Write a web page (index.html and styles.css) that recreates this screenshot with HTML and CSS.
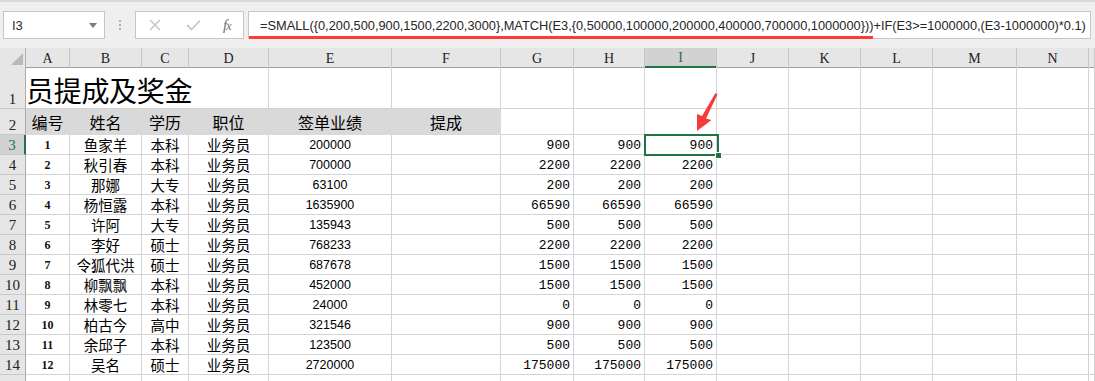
FILE: index.html
```html
<!DOCTYPE html>
<html lang="zh">
<head>
<meta charset="utf-8">
<title>员工提成及奖金</title>
<link rel="stylesheet" href="styles.css">
</head>
<body>
<div class="app">
  <div class="toolbar">
    <div class="namebox">
      <span class="nb-text">I3</span>
      <svg class="nb-caret" width="8" height="5" viewBox="0 0 8 5"><polygon points="0,0 8,0 4,5" fill="#7a7a7a"/></svg>
    </div>
    <div class="grip"><span></span><span></span><span></span></div>
    <div class="fbtns">
      <svg class="fb-x" width="12" height="12" viewBox="0 0 12 12"><path d="M1 1 L11 11 M11 1 L1 11" stroke="#c8c8c8" stroke-width="1.6" fill="none"/></svg>
      <svg class="fb-ok" width="15" height="12" viewBox="0 0 15 12"><path d="M1 6 L5.5 10.5 L14 1.5" stroke="#c8c8c8" stroke-width="1.8" fill="none"/></svg>
      <span class="fb-fx">f<i>x</i></span>
    </div>
    <div class="formula">
      <span class="f-mark">=SMALL({0,200,500,900,1500,2200,3000},MATCH(E3,{0,50000,100000,200000,400000,700000,1000000}))</span><span class="f-rest">+IF(E3&gt;=1000000,(E3-1000000)*0.1)</span>
    </div>
  </div>

  <div class="sheet">
    <div class="row hdr">
      <div class="corner"><svg width="12" height="12" viewBox="0 0 12 12"><polygon points="12,0 12,12 0,12" fill="#b9b9b9"/></svg></div>
      <div class="ch">A</div><div class="ch">B</div><div class="ch">C</div><div class="ch">D</div><div class="ch">E</div><div class="ch">F</div><div class="ch">G</div><div class="ch">H</div><div class="ch sel">I</div><div class="ch">J</div><div class="ch">K</div><div class="ch">L</div><div class="ch">M</div><div class="ch">N</div><div class="ch"></div>
    </div>

    <div class="row r1">
      <div class="rh">1</div>
      <div class="c title">员提成及奖金</div>
      <div class="c"></div><div class="c"></div><div class="c"></div><div class="c"></div><div class="c"></div><div class="c"></div><div class="c"></div><div class="c"></div><div class="c"></div><div class="c"></div><div class="c"></div>
    </div>

    <div class="row r2">
      <div class="rh">2</div>
      <div class="c th">编号</div><div class="c th">姓名</div><div class="c th">学历</div><div class="c th">职位</div><div class="c th">签单业绩</div><div class="c th">提成</div>
      <div class="c"></div><div class="c"></div><div class="c"></div><div class="c"></div><div class="c"></div><div class="c"></div><div class="c"></div><div class="c"></div><div class="c"></div>
    </div>

    <div class="row d"><div class="rh selrow">3</div><div class="c na">1</div><div class="c cj">鱼家羊</div><div class="c cj">本科</div><div class="c cj">业务员</div><div class="c en">200000</div><div class="c"></div><div class="c nr">900</div><div class="c nr">900</div><div class="c nr">900</div><div class="c"></div><div class="c"></div><div class="c"></div><div class="c"></div><div class="c"></div><div class="c"></div></div>
    <div class="row d"><div class="rh">4</div><div class="c na">2</div><div class="c cj">秋引春</div><div class="c cj">本科</div><div class="c cj">业务员</div><div class="c en">700000</div><div class="c"></div><div class="c nr">2200</div><div class="c nr">2200</div><div class="c nr">2200</div><div class="c"></div><div class="c"></div><div class="c"></div><div class="c"></div><div class="c"></div><div class="c"></div></div>
    <div class="row d"><div class="rh">5</div><div class="c na">3</div><div class="c cj">那娜</div><div class="c cj">大专</div><div class="c cj">业务员</div><div class="c en">63100</div><div class="c"></div><div class="c nr">200</div><div class="c nr">200</div><div class="c nr">200</div><div class="c"></div><div class="c"></div><div class="c"></div><div class="c"></div><div class="c"></div><div class="c"></div></div>
    <div class="row d"><div class="rh">6</div><div class="c na">4</div><div class="c cj">杨恒露</div><div class="c cj">本科</div><div class="c cj">业务员</div><div class="c en">1635900</div><div class="c"></div><div class="c nr">66590</div><div class="c nr">66590</div><div class="c nr">66590</div><div class="c"></div><div class="c"></div><div class="c"></div><div class="c"></div><div class="c"></div><div class="c"></div></div>
    <div class="row d"><div class="rh">7</div><div class="c na">5</div><div class="c cj">许阿</div><div class="c cj">大专</div><div class="c cj">业务员</div><div class="c en">135943</div><div class="c"></div><div class="c nr">500</div><div class="c nr">500</div><div class="c nr">500</div><div class="c"></div><div class="c"></div><div class="c"></div><div class="c"></div><div class="c"></div><div class="c"></div></div>
    <div class="row d"><div class="rh">8</div><div class="c na">6</div><div class="c cj">李好</div><div class="c cj">硕士</div><div class="c cj">业务员</div><div class="c en">768233</div><div class="c"></div><div class="c nr">2200</div><div class="c nr">2200</div><div class="c nr">2200</div><div class="c"></div><div class="c"></div><div class="c"></div><div class="c"></div><div class="c"></div><div class="c"></div></div>
    <div class="row d"><div class="rh">9</div><div class="c na">7</div><div class="c cj">令狐代洪</div><div class="c cj">硕士</div><div class="c cj">业务员</div><div class="c en">687678</div><div class="c"></div><div class="c nr">1500</div><div class="c nr">1500</div><div class="c nr">1500</div><div class="c"></div><div class="c"></div><div class="c"></div><div class="c"></div><div class="c"></div><div class="c"></div></div>
    <div class="row d"><div class="rh">10</div><div class="c na">8</div><div class="c cj">柳飘飘</div><div class="c cj">本科</div><div class="c cj">业务员</div><div class="c en">452000</div><div class="c"></div><div class="c nr">1500</div><div class="c nr">1500</div><div class="c nr">1500</div><div class="c"></div><div class="c"></div><div class="c"></div><div class="c"></div><div class="c"></div><div class="c"></div></div>
    <div class="row d"><div class="rh">11</div><div class="c na">9</div><div class="c cj">林零七</div><div class="c cj">本科</div><div class="c cj">业务员</div><div class="c en">24000</div><div class="c"></div><div class="c nr">0</div><div class="c nr">0</div><div class="c nr">0</div><div class="c"></div><div class="c"></div><div class="c"></div><div class="c"></div><div class="c"></div><div class="c"></div></div>
    <div class="row d"><div class="rh">12</div><div class="c na">10</div><div class="c cj">柏古今</div><div class="c cj">高中</div><div class="c cj">业务员</div><div class="c en">321546</div><div class="c"></div><div class="c nr">900</div><div class="c nr">900</div><div class="c nr">900</div><div class="c"></div><div class="c"></div><div class="c"></div><div class="c"></div><div class="c"></div><div class="c"></div></div>
    <div class="row d"><div class="rh">13</div><div class="c na">11</div><div class="c cj">余邱子</div><div class="c cj">本科</div><div class="c cj">业务员</div><div class="c en">123500</div><div class="c"></div><div class="c nr">500</div><div class="c nr">500</div><div class="c nr">500</div><div class="c"></div><div class="c"></div><div class="c"></div><div class="c"></div><div class="c"></div><div class="c"></div></div>
    <div class="row d"><div class="rh">14</div><div class="c na">12</div><div class="c cj">吴名</div><div class="c cj">硕士</div><div class="c cj">业务员</div><div class="c en">2720000</div><div class="c"></div><div class="c nr">175000</div><div class="c nr">175000</div><div class="c nr">175000</div><div class="c"></div><div class="c"></div><div class="c"></div><div class="c"></div><div class="c"></div><div class="c"></div></div>
    <div class="row d"><div class="rh"></div><div class="c"></div><div class="c"></div><div class="c"></div><div class="c"></div><div class="c"></div><div class="c"></div><div class="c"></div><div class="c"></div><div class="c"></div><div class="c"></div><div class="c"></div><div class="c"></div><div class="c"></div><div class="c"></div><div class="c"></div></div>

    <div class="selection"><span class="handle"></span></div>
    <svg class="arrow" width="30" height="44" viewBox="0 0 30 44">
      <polygon points="6,40 6,23 11,25 24.5,2 26.5,3.5 15,27.5 20.5,29" fill="#f53b3b"/>
    </svg>
  </div>
</div>
</body>
</html>
```

FILE: styles.css
```css
* { box-sizing: border-box; }
html, body { margin: 0; padding: 0; background: #ffffff; }
body { width: 1095px; height: 381px; overflow: hidden; font-family: "Liberation Sans", Arial, sans-serif; }

.app { width: 1095px; }

/* ---------- formula bar ---------- */
.toolbar {
  height: 48px;
  background: #efefef;
  border-top: 2px solid #d9d9d9;
  display: flex;
  align-items: flex-start;
  padding: 9px 4px 0 3px;
}
.namebox {
  width: 102px;
  height: 28px;
  background: #fff;
  border: 1px solid #c6c6c6;
  display: flex;
  align-items: center;
  justify-content: space-between;
  padding: 0 7px 0 8px;
}
.nb-text { font-size: 13px; color: #2b2b2b; }
.nb-caret { margin-top: 1px; }
.grip {
  width: 30px;
  height: 28px;
  display: flex;
  flex-direction: column;
  align-items: center;
  justify-content: center;
  gap: 2px;
}
.grip span { width: 2px; height: 2px; background: #b0b0b0; display: block; }
.fbtns {
  width: 109px;
  height: 28px;
  background: #fff;
  border: 1px solid #c6c6c6;
  display: flex;
  align-items: center;
  padding: 0 0 0 13px;
}
.fb-x { margin-right: 25px; }
.fb-ok { margin-right: 22px; }
.fb-fx {
  font-family: "Liberation Serif", "Times New Roman", serif;
  font-style: italic;
  font-size: 15px;
  color: #6e6e6e;
  letter-spacing: -1px;
}
.fb-fx i { font-size: 12px; }
.formula {
  flex: 1;
  margin-left: 4px;
  height: 28px;
  background: #fff;
  border: 1px solid #c6c6c6;
  border-bottom: none;
  display: flex;
  align-items: stretch;
  font-size: 12.8px;
  color: #262626;
  white-space: nowrap;
  overflow: hidden;
}
.f-mark {
  display: flex;
  align-items: center;
  padding-left: 11px;
  border-bottom: 3px solid #ff3a3a;
  padding-top: 2px;
}
.f-rest {
  flex: 1;
  display: flex;
  align-items: center;
  border-bottom: 1px solid #c6c6c6;
}

/* ---------- sheet ---------- */
.sheet { position: relative; }
.row {
  display: grid;
  grid-template-columns: 26px 44px 72px 47px 80px 123px 109px 73px 71px 72px 72px 72px 72px 84px 72px 1fr;
}
.hdr { height: 19px; background: #e6e6e6; }
.corner {
  background: #e6e6e6;
  border-right: 1px solid #b4b4b4;
  border-bottom: 1px solid #a0a0a0;
  display: flex;
  align-items: flex-end;
  justify-content: flex-end;
  padding: 0 2px 2px 0;
}
.ch {
  background: #e6e6e6;
  border-right: 1px solid #c8c8c8;
  border-bottom: 1px solid #a0a0a0;
  font-family: "Liberation Serif", "Times New Roman", serif;
  font-size: 14px;
  color: #222;
  display: flex;
  align-items: center;
  justify-content: center;
  padding-top: 2px;
}
.ch.sel {
  background: #d2d2d2;
  color: #217346;
  border-bottom: 2px solid #217346;
}

.rh {
  background: #e6e6e6;
  border-right: 1px solid #ababab;
  border-bottom: 1px solid #c8c8c8;
  font-family: "Liberation Serif", "Times New Roman", serif;
  font-size: 15px;
  color: #222;
  display: flex;
  align-items: flex-end;
  justify-content: center;
  padding-bottom: 1px;
  line-height: 16px;
}
.rh.selrow {
  background: #d2d2d2;
  color: #217346;
  border-right: 2px solid #217346;
}

.c {
  border-right: 1px solid #d4d4d4;
  border-bottom: 1px solid #d4d4d4;
  display: flex;
  align-items: center;
  justify-content: center;
  white-space: nowrap;
  overflow: visible;
  color: #000;
}
.r1 { height: 42px; }
.r2 { height: 26px; }
.d { height: 20px; }

.title {
  grid-column: 2 / 6;
  justify-content: flex-start;
  align-items: flex-end;
  font-family: "Noto Sans CJK SC", sans-serif;
  font-size: 28px;
  line-height: 34px;
  padding: 0 0 1px 0;
  letter-spacing: -0.3px;
}

.th {
  background: #d9d9d9;
  border-right-color: #d9d9d9;
  border-bottom-color: #d9d9d9;
  font-family: "Noto Sans CJK SC", sans-serif;
  font-size: 16px;
  align-items: flex-end;
  line-height: 20px;
  padding-bottom: 2px;
}

.cj {
  font-family: "Noto Sans CJK SC", sans-serif;
  font-size: 14.5px;
  line-height: 19px;
}
.na {
  font-family: "Liberation Serif", "Times New Roman", serif;
  font-size: 12px;
  font-weight: bold;
  color: #111;
  padding-top: 1px;
}
.en {
  font-family: "Liberation Sans", Arial, sans-serif;
  font-size: 12.5px;
  padding-top: 1px;
}
.nr {
  justify-content: flex-end;
  padding-right: 3px;
  font-family: "Liberation Mono", "Courier New", monospace;
  font-size: 13px;
  padding-top: 1px;
}

/* selection overlay on I3 */
.selection {
  position: absolute;
  left: 644px;
  top: 86px;
  width: 75px;
  height: 22px;
  border: 2px solid #217346;
}
.handle {
  position: absolute;
  right: -5px;
  bottom: -5px;
  width: 7px;
  height: 7px;
  background: #217346;
  border: 1px solid #fff;
}
.arrow {
  position: absolute;
  left: 691px;
  top: 43px;
}
```
